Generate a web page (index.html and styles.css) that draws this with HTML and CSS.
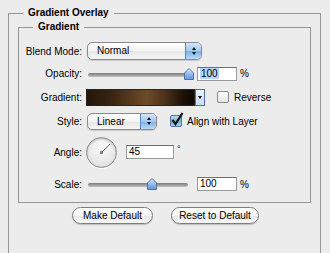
FILE: index.html
```html
<!DOCTYPE html>
<html lang="en">
<head>
  <meta charset="UTF-8">
  <title>Gradient Overlay</title>
  <link rel="stylesheet" href="styles.css">
</head>
<body>
  <fieldset class="panel">
    <legend>Gradient Overlay</legend>
    <fieldset class="group">
      <legend>Gradient</legend>

      <div class="row row-blend">
        <label>Blend Mode:</label>
        <div class="popup popup-blend">
          <span class="value">Normal</span>
          <span class="stepper"><i class="up"></i><i class="down"></i></span>
        </div>
      </div>

      <div class="row row-opacity">
        <label>Opacity:</label>
        <div class="slider">
          <div class="track"></div>
          <svg class="thumb" style="left:96px" width="10" height="12" viewBox="0 0 10 12">
            <defs>
              <linearGradient id="tb1" x1="0" y1="0" x2="0" y2="1">
                <stop offset="0" stop-color="#d7e8fb"/>
                <stop offset="0.5" stop-color="#93bdf0"/>
                <stop offset="1" stop-color="#5f97de"/>
              </linearGradient>
            </defs>
            <path d="M5 0.5 L9.5 5 L9.5 11.5 L0.5 11.5 L0.5 5 Z" fill="url(#tb1)" stroke="#5a6f8e"/>
          </svg>
        </div>
        <span class="field"><span class="sel">100</span></span>
        <span class="unit">%</span>
      </div>

      <div class="row row-gradient">
        <label>Gradient:</label>
        <div class="swatch"></div>
        <div class="drop"><i class="down"></i></div>
        <span class="check"></span>
        <span class="check-label">Reverse</span>
      </div>

      <div class="row row-style">
        <label>Style:</label>
        <div class="popup popup-style">
          <span class="value">Linear</span>
          <span class="stepper"><i class="up"></i><i class="down"></i></span>
        </div>
        <span class="check checked">
          <svg width="14" height="15" viewBox="0 0 14 15">
            <path d="M2.5 8 L5.5 12 L12.5 1" fill="none" stroke="#111" stroke-width="2.2"/>
          </svg>
        </span>
        <span class="check-label">Align with Layer</span>
      </div>

      <div class="row row-angle">
        <label>Angle:</label>
        <div class="dial">
          <svg width="31" height="31" viewBox="0 0 31 31">
            <line x1="15.5" y1="15.5" x2="24.5" y2="6.5" stroke="#666" stroke-width="1"/>
            <rect x="14" y="14" width="3" height="3" fill="#777"/>
          </svg>
        </div>
        <span class="field field-angle">45</span>
        <span class="deg">°</span>
      </div>

      <div class="row row-scale">
        <label>Scale:</label>
        <div class="slider">
          <div class="track track-short"></div>
          <svg class="thumb" style="left:59px" width="10" height="12" viewBox="0 0 10 12">
            <defs>
              <linearGradient id="tb2" x1="0" y1="0" x2="0" y2="1">
                <stop offset="0" stop-color="#d7e8fb"/>
                <stop offset="0.5" stop-color="#93bdf0"/>
                <stop offset="1" stop-color="#5f97de"/>
              </linearGradient>
            </defs>
            <path d="M5 0.5 L9.5 5 L9.5 11.5 L0.5 11.5 L0.5 5 Z" fill="url(#tb2)" stroke="#5a6f8e"/>
          </svg>
        </div>
        <span class="field">100</span>
        <span class="unit">%</span>
      </div>
    </fieldset>

    <div class="buttons">
      <button class="btn btn-make" type="button">Make Default</button>
      <button class="btn btn-reset" type="button">Reset to Default</button>
    </div>
  </fieldset>
</body>
</html>
```

FILE: styles.css
```css
body {
  margin: 0;
  width: 330px;
  height: 253px;
  overflow: hidden;
  background: #ececec;
  font-family: "Liberation Sans", Arial, sans-serif;
  font-size: 10px;
  color: #000;
}
.panel {
  margin: 6px 0 0 8px;
  width: 313px;
  height: 247px;
  box-sizing: border-box;
  border: 1px solid #959595;
  border-bottom: 0;
  padding: 0 9px;
}
.panel > legend {
  margin-left: 5px;
  padding: 0 5px;
  font-weight: bold;
  line-height: 14px;
}
.group {
  margin: 0;
  border: 1px solid #959595;
  padding: 6px 0 5px;
}
.group > legend {
  margin-left: 14px;
  padding: 0 5px;
  font-weight: bold;
  line-height: 14px;
}
.row {
  display: flex;
  align-items: center;
}
.row label {
  flex: 0 0 63px;
  margin-right: 5px;
  text-align: right;
}
.row-blend { height: 22px; }
.row-opacity { height: 23px; }
.row-gradient { height: 24px; }
.row-style { height: 24px; }
.row-angle { height: 38px; }
.row-scale { height: 26px; }

/* popup menus */
.popup {
  display: flex;
  height: 18px;
  box-sizing: border-box;
  border: 1px solid #8b8b8b;
  border-radius: 5px;
  overflow: hidden;
  background: linear-gradient(#ffffff, #f3f3f3 50%, #e6e6e6 51%, #f6f6f6);
  box-shadow: 0 1px 1px rgba(0,0,0,0.15);
}
.popup-blend { width: 115px; }
.popup-style { width: 70px; height: 17px; }
.popup .value {
  flex: 1;
  padding-left: 9px;
  line-height: 16px;
}
.popup-style .value { line-height: 15px; }
.stepper {
  width: 15px;
  border-left: 1px solid #5d84c0;
  background: linear-gradient(#d3e5f9, #a3c7f0 50%, #7fb1ea 51%, #b7dafb);
  display: flex;
  flex-direction: column;
  align-items: center;
  justify-content: center;
  gap: 2px;
}
.up, .down {
  display: block;
  width: 0;
  height: 0;
  border-left: 2.5px solid transparent;
  border-right: 2.5px solid transparent;
}
.up { border-bottom: 3px solid #111; }
.down { border-top: 3px solid #111; }

/* sliders */
.slider {
  position: relative;
  width: 102px;
  height: 12px;
  margin-left: 1px;
}
.track {
  position: absolute;
  left: 0;
  right: 0;
  top: 5px;
  height: 4px;
  border-radius: 2px;
  background: linear-gradient(#7b7b7b, #a3a3a3 60%, #c2c2c2);
}
.track-short { right: 2px; }
.thumb {
  position: absolute;
  top: 0;
}

/* text fields */
.field {
  display: inline-block;
  width: 40px;
  height: 14px;
  box-sizing: border-box;
  border: 1px solid #9a9a9a;
  border-top-color: #6f6f6f;
  background: #fff;
  padding: 0 2px;
  line-height: 12px;
  margin-left: 7px;
}
.sel {
  background: #b5d5ff;
  padding: 0 1px;
}
.unit { margin-left: 3px; }
.field-angle {
  width: 48px;
  margin-left: 9px;
}
.deg {
  margin-left: 3px;
  align-self: flex-start;
  margin-top: 11px;
  font-size: 9px;
}

/* gradient swatch */
.swatch {
  width: 109px;
  height: 17px;
  box-sizing: border-box;
  border: 1px solid #222;
  margin-left: -1px;
  background: linear-gradient(90deg, #24170b 0%, #352210 20%, #5a3c1e 42%, #6f4b27 56%, #4f341a 72%, #1c1107 90%, #0d0703 100%);
}
.drop {
  width: 10px;
  height: 17px;
  box-sizing: border-box;
  border: 1px solid #4b6ea8;
  background: linear-gradient(#eef4fc, #c9dcf4);
  display: flex;
  align-items: center;
  justify-content: center;
}

/* checkboxes */
.check {
  position: relative;
  width: 12px;
  height: 12px;
  box-sizing: border-box;
  border: 1px solid #8a8a8a;
  border-radius: 2px;
  background: linear-gradient(#ffffff, #e4e4e4);
  margin-left: 12px;
}
.checked {
  border-color: #4d72ad;
  background: linear-gradient(#c2dbf7, #7eb0ea 55%, #a7cdf6);
  margin-left: 13px;
}
.checked svg {
  position: absolute;
  left: -1px;
  top: -4px;
}
.check-label { margin-left: 5px; }

/* angle dial */
.dial {
  width: 31px;
  height: 31px;
  box-sizing: border-box;
  border: 1px solid #8c8c8c;
  border-radius: 50%;
  margin-left: -1px;
  background: radial-gradient(circle at 50% 35%, #fbfbfb, #e6e6e6 65%, #d2d2d2);
  box-shadow: inset 0 1px 2px rgba(0,0,0,0.25), 0 1px 1px rgba(255,255,255,0.8);
  display: flex;
  align-items: center;
  justify-content: center;
}
.dial svg { display: block; }

/* buttons */
.buttons {
  display: flex;
  gap: 18px;
  margin-top: 4px;
  padding-left: 54px;
}
.btn {
  height: 17px;
  box-sizing: border-box;
  border: 1px solid #7d7d7d;
  border-radius: 9px;
  background: linear-gradient(#ffffff, #f4f4f4 50%, #e6e6e6 51%, #f9f9f9);
  box-shadow: 0 1px 1px rgba(0,0,0,0.2);
  font: inherit;
  color: #000;
  padding: 0;
}
.btn-make { width: 81px; }
.btn-reset { width: 88px; }
```
